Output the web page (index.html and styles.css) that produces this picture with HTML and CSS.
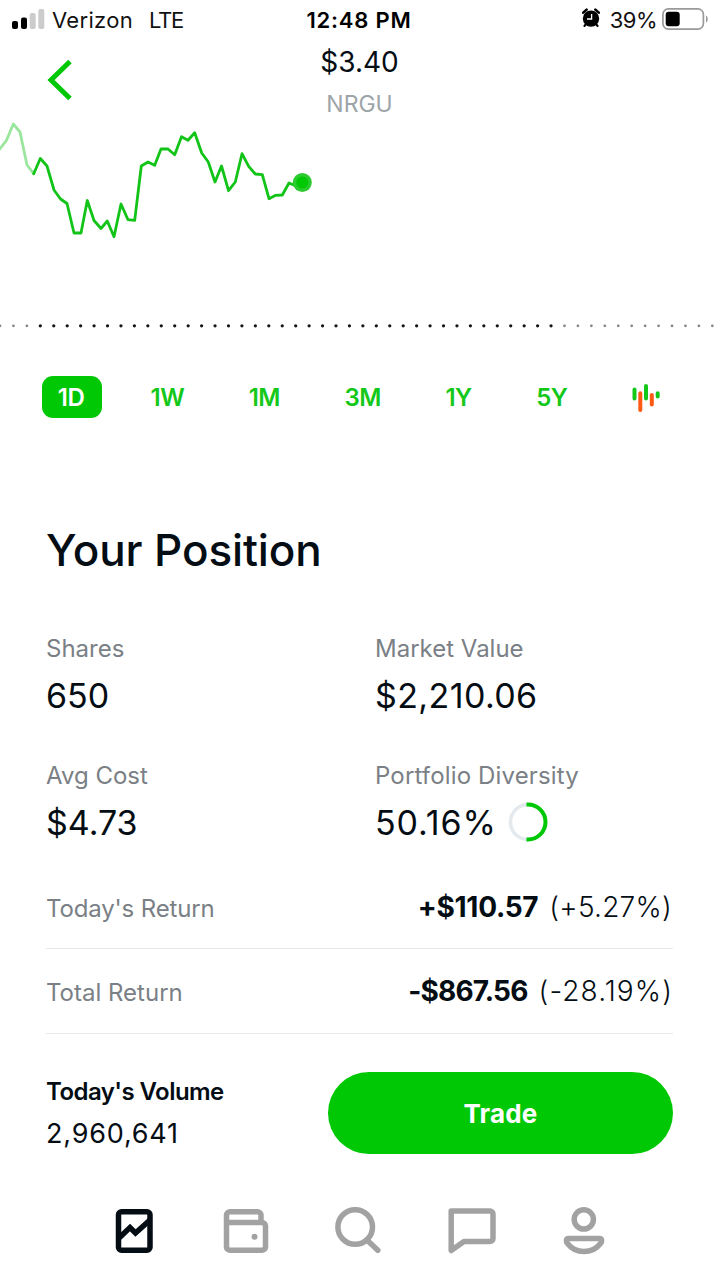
FILE: index.html
```html
<!DOCTYPE html>
<html lang="en">
<head>
<meta charset="UTF-8" />
<meta name="viewport" content="width=device-width, initial-scale=1" />
<title>NRGU</title>
<link rel="stylesheet" href="styles.css">
</head>
<body>
  <div class="status-bar">
    <div class="status-left">
      <svg class="signal" width="33" height="20" viewBox="0 0 33 20">
        <rect x="0" y="12" width="6" height="8" rx="2" fill="#000"/>
        <rect x="9" y="8.5" width="6" height="11.5" rx="2" fill="#000"/>
        <rect x="17.7" y="4" width="6" height="16" rx="2" fill="#ccc"/>
        <rect x="26.3" y="0" width="6" height="20" rx="2" fill="#ccc"/>
      </svg>
      <span class="carrier">Verizon</span>
      <span class="network">LTE</span>
    </div>
    <div class="clock">12:48 PM</div>
    <div class="status-right">
      <svg class="alarm" width="18" height="20" viewBox="0 0 18 20">
        <path d="M1.2 4.6 4.6 1.6M16.8 4.6 13.4 1.6" stroke="#000" stroke-width="2.6" stroke-linecap="round"/>
        <path d="M4.5 15.5 2.4 18M13.5 15.5 15.6 18" stroke="#000" stroke-width="2" stroke-linecap="round"/>
        <circle cx="9" cy="10.6" r="8.2" fill="#000"/>
        <path d="M9.6 6V11H5" fill="none" stroke="#fff" stroke-width="1.3"/>
      </svg>
      <span class="percent">39%</span>
      <svg class="battery" width="48" height="22" viewBox="0 0 48 22">
        <rect x=".9" y=".9" width="40.5" height="20.2" rx="5.5" fill="#fff" stroke="#999" stroke-width="1.7"/>
        <rect x="3.7" y="3.8" width="14" height="14.5" rx="3" fill="#000"/>
        <path d="M44 7.5c2.3 1 2.3 6 0 7z" fill="#999"/>
      </svg>
    </div>
  </div>

  <header class="header">
    <svg class="back" width="26" height="42" viewBox="0 0 26 42">
      <path d="M23 2.5 4 21 23 39.5" fill="none" stroke="#00c805" stroke-width="5"/>
    </svg>
    <div class="quote">
      <div class="price">$3.40</div>
      <div class="ticker">NRGU</div>
    </div>
  </header>

  <svg class="chart" width="719" height="225" viewBox="0 0 719 225">
    <g fill="none" stroke-width="2.8" stroke-linejoin="round" stroke-linecap="round">
      <polyline stroke="#9be69d" points="-1,35 6.3,25.7 13.3,9 20,17 27,50 33.7,58.7"/>
      <polyline stroke="#11c417" points="33.7,58.7 40.3,43.5 47,51 54,75 60.5,84 67,88.5 74,118 81,118 87.3,85.5 94,105.5 101,113.5 107.3,106 114,121.7 121,89 128,104.7 134.7,105.3 141.3,51 148,47 154.7,50.3 161,34 168,34 174.7,39.7 181.5,21.7 188,25.3 194.7,17.7 201.7,38 208.3,47 215,67 221.5,51 228.5,75.7 235.3,67 242,38.7 248.7,51.3 255.3,59 262.3,59.7 269,83.7 275.7,80.3 282.3,80 289,68 295,70.5 302.3,67.5"/>
    </g>
    <circle cx="302.3" cy="67.5" r="9.5" fill="#2bcb30"/>
    <circle cx="302.3" cy="67.5" r="6" fill="#00c805"/>
    <!-- previous close -->
    <g fill="none" stroke-linecap="round" stroke-dasharray="0 13.44">
      <path d="M0 210.8H30" stroke="#858585" stroke-width="2.8"/>
      <path d="M40.32 210.8H555" stroke="#161616" stroke-width="3.3"/>
      <path d="M564.5 210.8H719" stroke="#858585" stroke-width="2.8"/>
    </g>
  </svg>

  <div class="ranges">
    <span class="range active">1D</span>
    <span class="range">1W</span>
    <span class="range">1M</span>
    <span class="range">3M</span>
    <span class="range">1Y</span>
    <span class="range">5Y</span>
    <svg class="candles" width="28" height="30" viewBox="0 0 28 30">
      <g stroke-width="4" stroke-linecap="round">
        <path d="M2.5 7.5V16.5M14 4V16.5M25.7 11.3V14.5" stroke="#14c81a"/>
        <path d="M8.3 11.3V28M19.8 13V22.5" stroke="#ff5a14"/>
      </g>
    </svg>
  </div>

  <main class="position">
    <h1>Your Position</h1>
    <div class="stats">
      <div class="stat">
        <div class="label">Shares</div>
        <div class="value">650</div>
      </div>
      <div class="stat">
        <div class="label">Market Value</div>
        <div class="value market">$2,210.06</div>
      </div>
      <div class="stat">
        <div class="label">Avg Cost</div>
        <div class="value">$4.73</div>
      </div>
      <div class="stat">
        <div class="label diversity-label">Portfolio Diversity</div>
        <div class="value">
          <span class="diversity">50.16%</span>
          <svg class="ring" width="40" height="40" viewBox="0 0 40 40">
            <circle cx="20" cy="20" r="17.5" fill="none" stroke="#e3e9ec" stroke-width="3.5"/>
            <path d="M18.5 2.5H20a17.5 17.5 0 0 1 0 35H18.5" fill="none" stroke="#00c805" stroke-width="4"/>
          </svg>
        </div>
      </div>
    </div>

    <div class="return-row">
      <span class="label today">Today's Return</span>
      <span class="amount"><b class="gain">+$110.57</b><span class="pct">(+5.27%)</span></span>
    </div>
    <div class="return-row">
      <span class="label">Total Return</span>
      <span class="amount"><b class="loss">-$867.56</b><span class="pct pct-loss">(-28.19%)</span></span>
    </div>
  </main>

  <div class="trade-bar">
    <div class="volume">
      <div class="volume-label">Today's Volume</div>
      <div class="volume-value">2,960,641</div>
    </div>
    <button class="trade">Trade</button>
  </div>

  <nav class="tabs">
    <svg width="48" height="50" viewBox="0 0 48 50" fill="none" stroke="#040d14" stroke-width="5.5">
      <rect x="8.5" y="4.75" width="31.5" height="38.5" rx="3"/>
      <path d="M8.5 31.5 20 20.5 25.5 26 40 13"/>
    </svg>
    <svg width="48" height="50" viewBox="0 0 48 50" fill="none" stroke="#a2a2a2" stroke-width="5.5">
      <path d="M38 16V8a3.5 3.5 0 0 0-3.5-3.25H7A3.5 3.5 0 0 0 3.5 8V40A3.5 3.5 0 0 0 7 43.25H39A3.5 3.5 0 0 0 42.5 40V19A3.5 3.5 0 0 0 39 15.6H3.5"/>
      <circle cx="31.5" cy="29.7" r="3" fill="#a2a2a2" stroke="none"/>
    </svg>
    <svg width="48" height="50" viewBox="0 0 48 50" fill="none" stroke="#a2a2a2" stroke-width="5.5">
      <circle cx="20.2" cy="20" r="17.3"/>
      <path d="M32 33 42.8 43.3" stroke-linecap="round"/>
    </svg>
    <svg width="48" height="50" viewBox="0 0 48 50" fill="none" stroke="#a2a2a2" stroke-width="5.5" stroke-linejoin="round">
      <path d="M3.2 4H42a3 3 0 0 1 3 3V31.5a3 3 0 0 1-3 3H16L3.2 43.5z"/>
    </svg>
    <svg width="48" height="50" viewBox="0 0 48 50" fill="none" stroke="#a2a2a2" stroke-width="5.5">
      <circle cx="23.8" cy="12.4" r="9.6"/>
      <path d="M8.5 31.5H39.5C42 31.5 42.3 34.500 40.500 36.500 32 47.300 16 47.300 7.500 36.500 5.700 34.500 6 31.500 8.500 31.500z"/>
    </svg>
  </nav>
</body>
</html>
```
FILE: styles.css
```css
* {
  box-sizing: border-box;
}
body {
  margin: 0;
  width: 719px;
  height: 1279px;
  overflow: hidden;
  background: #fff;
  color: #040d14;
  font-family: Inter, "Liberation Sans", sans-serif;
  font-weight: 400;
}
svg {
  display: block;
  flex: none;
}

/* status bar */
.status-bar {
  height: 40px;
  display: grid;
  grid-template-columns: 1fr auto 1fr;
  align-items: center;
  padding: 0 9px 0 12px;
  font-size: 22px;
  line-height: 40px;
  color: #111;
}
.status-left,
.status-right {
  display: flex;
  align-items: center;
}
.status-right {
  justify-content: flex-end;
}
.signal {
  margin: 0 7px 2px 0;
}
.carrier {
  letter-spacing: 0.3px;
}
.network {
  margin-left: 16px;
  letter-spacing: -1.2px;
}
.clock {
  margin-right: 4px;
  font-weight: 600;
  letter-spacing: 0.8px;
  color: #000;
}
.alarm {
  margin: 0 10px 4px 0;
}
.battery {
  margin: 0 0 2px 5px;
}
.percent {
  letter-spacing: -0.5px;
}

/* header */
.header {
  position: relative;
  height: 75px;
}
.back {
  position: absolute;
  left: 47px;
  top: 19px;
}
.quote {
  padding-top: 1px;
  text-align: center;
}
.price {
  font-size: 28px;
  line-height: 42px;
}
.ticker {
  font-size: 23px;
  line-height: 43px;
  color: #9da5a9;
}

/* time ranges */
.ranges {
  display: flex;
  align-items: center;
  justify-content: space-between;
  margin-top: 36px;
  padding: 0 59px 0 42px;
  height: 42px;
  font-size: 24px;
  font-weight: 600;
  letter-spacing: -0.5px;
  line-height: 43px;
  color: #14c81a;
}
.active {
  width: 60px;
  height: 42px;
  margin-right: -16px;
  padding-right: 2px;
  border-radius: 11px;
  background: #00c805;
  color: #fff;
  text-align: center;
}

/* position */
.position {
  padding: 0 46px;
}
h1 {
  margin: 102px 0 0;
  font-size: 44px;
  line-height: 60px;
  font-weight: 500;
  letter-spacing: -0.1px;
}
.stats {
  display: grid;
  grid-template-columns: 329px 1fr;
  grid-template-rows: 126.5px 104px;
  margin-top: 54px;
}
.label {
  font-size: 24px;
  line-height: 30px;
  color: #7a8085;
}
.diversity-label {
  letter-spacing: 0.15px;
}
.value {
  display: flex;
  align-items: center;
  height: 63px;
  font-size: 34px;
}
.market {
  letter-spacing: 0.4px;
}
.diversity {
  letter-spacing: 0.9px;
}
.ring {
  margin-left: 11px;
}
.return-row {
  display: flex;
  align-items: center;
  justify-content: space-between;
  height: 84.5px;
  padding-top: 1px;
  border-bottom: 1px solid #e6e8e9;
}
.return-row .label {
  padding-top: 4px;
}
.today {
  letter-spacing: -0.15px;
}
.amount {
  font-size: 28px;
  line-height: 40px;
}
.gain {
  letter-spacing: -0.3px;
}
.loss {
  letter-spacing: -0.8px;
}
.pct {
  margin-left: 11px;
  margin-right: 1px;
  font-weight: 300;
  letter-spacing: 0.25px;
}
.pct-loss {
  margin-right: 0;
  letter-spacing: 1.1px;
}

/* trade bar */
.trade-bar {
  display: flex;
  align-items: center;
  justify-content: space-between;
  margin-top: 38px;
  padding: 0 46px;
}
.volume-label {
  font-size: 24px;
  font-weight: 600;
  letter-spacing: -0.55px;
  line-height: 40px;
}
.volume-value {
  font-size: 27px;
  letter-spacing: 0.8px;
  line-height: 43px;
}
.trade {
  width: 345px;
  height: 82px;
  border: none;
  border-radius: 41px;
  background: #00c805;
  color: #fff;
  font: 700 26px Inter, "Liberation Sans", sans-serif;
  letter-spacing: 0.2px;
}

/* tabs */
.tabs {
  display: flex;
  justify-content: space-between;
  margin-top: 52px;
  padding: 0 111px 0 110px;
}
```
